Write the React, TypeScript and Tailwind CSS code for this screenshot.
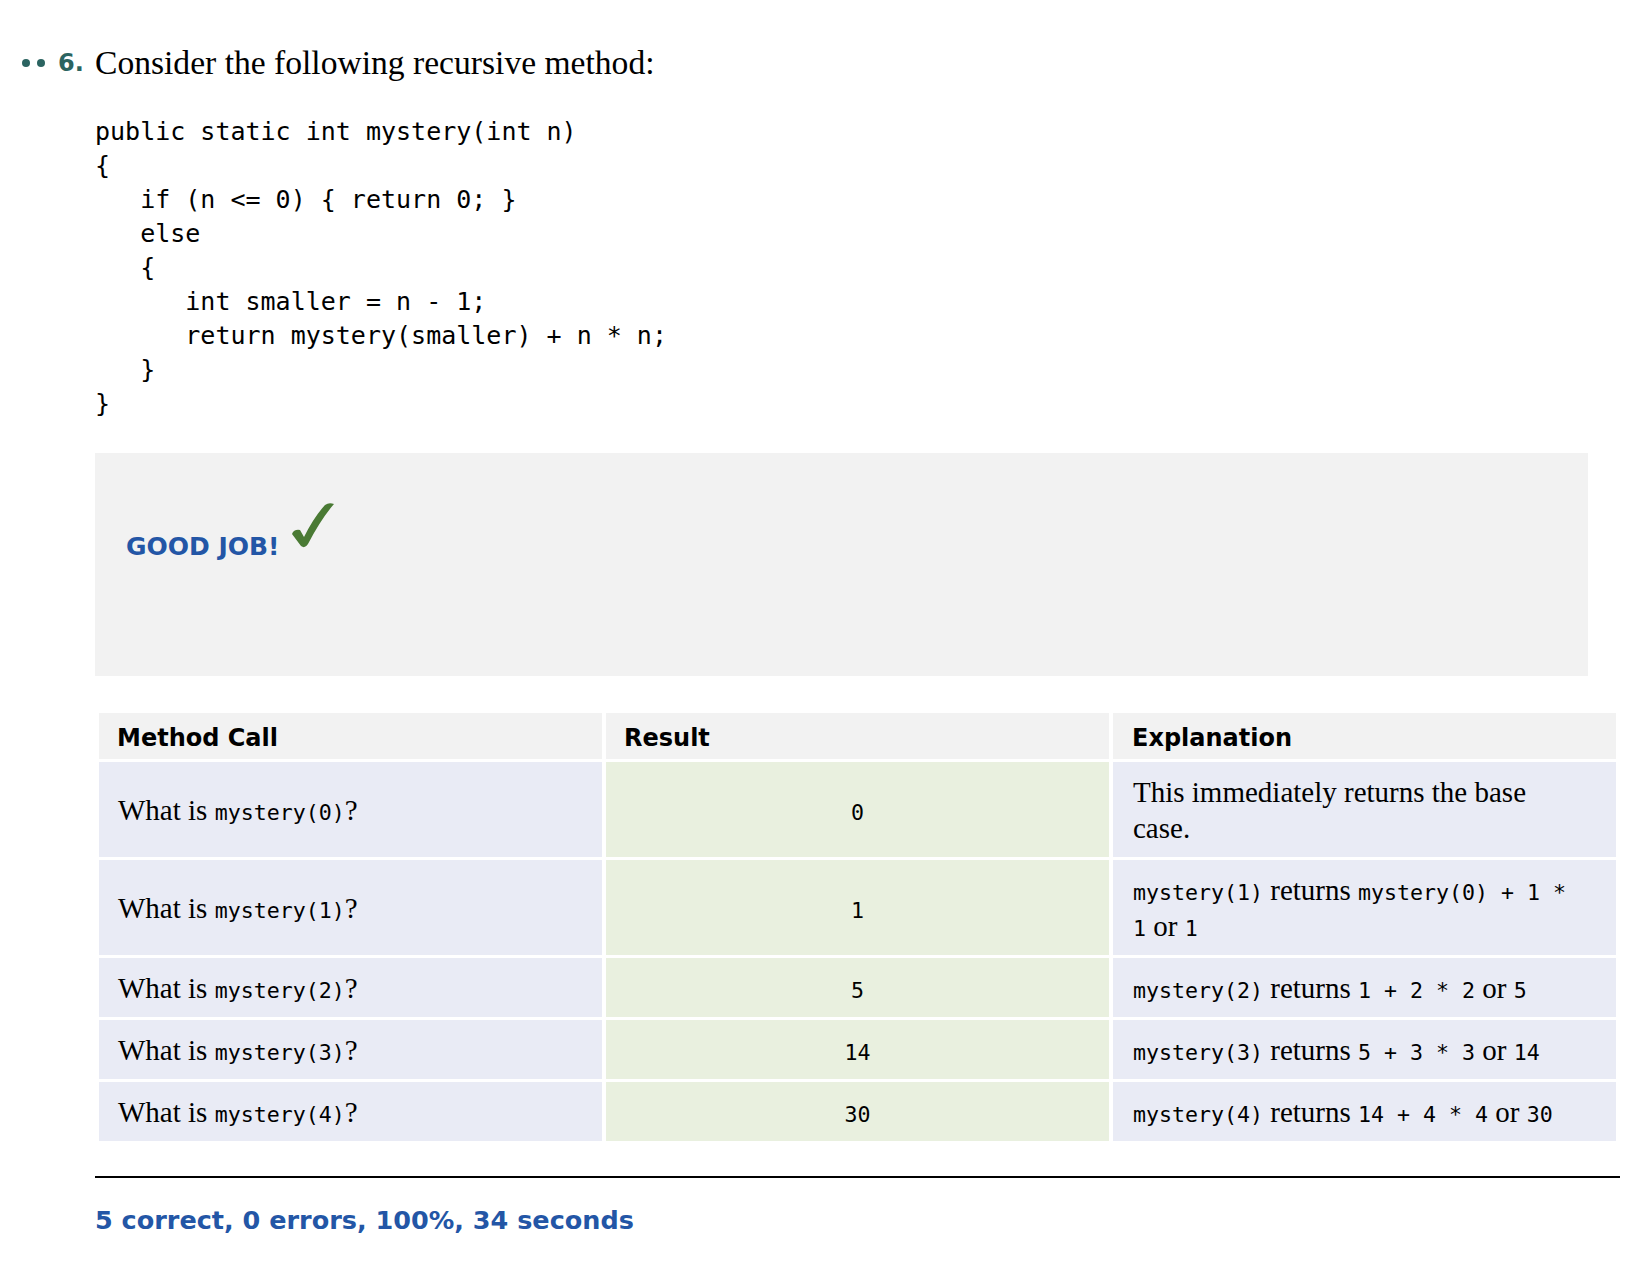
import React from 'react';

const SERIF = "font-['Liberation_Serif',serif]";
const MONO = "font-['DejaVu_Sans_Mono',monospace]";
const SANS = "font-['DejaVu_Sans',sans-serif]";

const CODE = `public static int mystery(int n)
{
   if (n <= 0) { return 0; }
   else
   {
      int smaller = n - 1;
      return mystery(smaller) + n * n;
   }
}`;

function C({ children }: { children: React.ReactNode }) {
    return <code className={`${MONO} text-[21.6px] leading-none`}>{children}</code>;
}

const ROWS: { call: string; result: string; explain: React.ReactNode }[] = [
    {
        call: 'mystery(0)',
        result: '0',
        explain: (
            <>
                This immediately returns the base
                <br />
                case.
            </>
        ),
    },
    {
        call: 'mystery(1)',
        result: '1',
        explain: (
            <>
                <C>mystery(1)</C> returns <C>mystery(0) + 1 *</C>
                <br />
                <C>1</C> or <C>1</C>
            </>
        ),
    },
    {
        call: 'mystery(2)',
        result: '5',
        explain: (
            <>
                <C>mystery(2)</C> returns <C>1 + 2 * 2</C> or <C>5</C>
            </>
        ),
    },
    {
        call: 'mystery(3)',
        result: '14',
        explain: (
            <>
                <C>mystery(3)</C> returns <C>5 + 3 * 3</C> or <C>14</C>
            </>
        ),
    },
    {
        call: 'mystery(4)',
        result: '30',
        explain: (
            <>
                <C>mystery(4)</C> returns <C>14 + 4 * 4</C> or <C>30</C>
            </>
        ),
    },
];

export default function App() {
    return (
        <div className="min-h-[1266px] w-[1648px] bg-white pt-[43px] text-black">
            {/* Question heading */}
            <div className="flex items-center">
                <div className="flex w-[95px] items-center pl-[22px]">
                    <span className="h-[8px] w-[8px] rounded-full bg-[#2b6461]" />
                    <span className="ml-[7px] h-[8px] w-[8px] rounded-full bg-[#2b6461]" />
                    <span className={`ml-[13px] ${SANS} text-[24px] font-bold leading-[40px] text-[#2b6461]`}>6.</span>
                </div>
                <h2 className={`${SERIF} text-[33.6px] leading-[40px]`}>Consider the following recursive method:</h2>
            </div>

            <div className="w-[1620px] pl-[95px]">
                {/* Code */}
                <pre className={`mt-[32px] ${MONO} text-[25px] leading-[34px]`}>{CODE}</pre>

                {/* Feedback box */}
                <div className="mt-[32px] h-[223px] w-[1493px] bg-[#f2f2f2] pl-[31px] pt-[50px]">
                    <div className="flex items-start gap-[12px]">
                        <span className={`mt-[31px] ${SANS} text-[25px] font-bold leading-none text-[#2356a6]`}>GOOD JOB!</span>
                        <svg width="42" height="46" viewBox="0 0 42 46" className="shrink-0">
                            <path
                                d="M0,31 Q2,26 8,27 L12,34 Q22,14 33,2 Q37,-1 42,1 Q29,16 16,41 Q13,46 9,43 Z"
                                fill="#4a7a34"
                            />
                        </svg>
                    </div>
                </div>

                {/* Results table */}
                <table className="mt-[34px] w-[1525px] table-fixed border-separate border-spacing-x-[4px] border-spacing-y-[3px]">
                    <thead>
                        <tr className={`${SANS} text-[24px] font-bold leading-[24px]`}>
                            <th className="bg-[#f2f2f2] px-[18px] pb-[9px] pt-[13px] text-left">Method Call</th>
                            <th className="bg-[#f2f2f2] px-[18px] pb-[9px] pt-[13px] text-left">Result</th>
                            <th className="bg-[#f2f2f2] px-[19px] pb-[9px] pt-[13px] text-left">Explanation</th>
                        </tr>
                    </thead>
                    <tbody className={`${SERIF} text-[29px] leading-[36px]`}>
                        {ROWS.map((r) => (
                            <tr key={r.call}>
                                <td className="bg-[#e9ebf5] px-[19px] py-[11.5px]">
                                    What is <C>{r.call}</C>?
                                </td>
                                <td className="bg-[#e9f0df] px-[20px] py-[11.5px] text-center">
                                    <C>{r.result}</C>
                                </td>
                                <td className="bg-[#e9ebf5] px-[20px] py-[11.5px]">{r.explain}</td>
                            </tr>
                        ))}
                    </tbody>
                </table>

                {/* Footer */}
                <div className="mt-[32px] h-[2px] w-[1525px] bg-black" />
                <div className={`mt-[27px] ${SANS} text-[25.5px] font-bold leading-[30px] text-[#2356a6]`}>
                    5 correct, 0 errors, 100%, 34 seconds
                </div>
            </div>
        </div>
    );
}
